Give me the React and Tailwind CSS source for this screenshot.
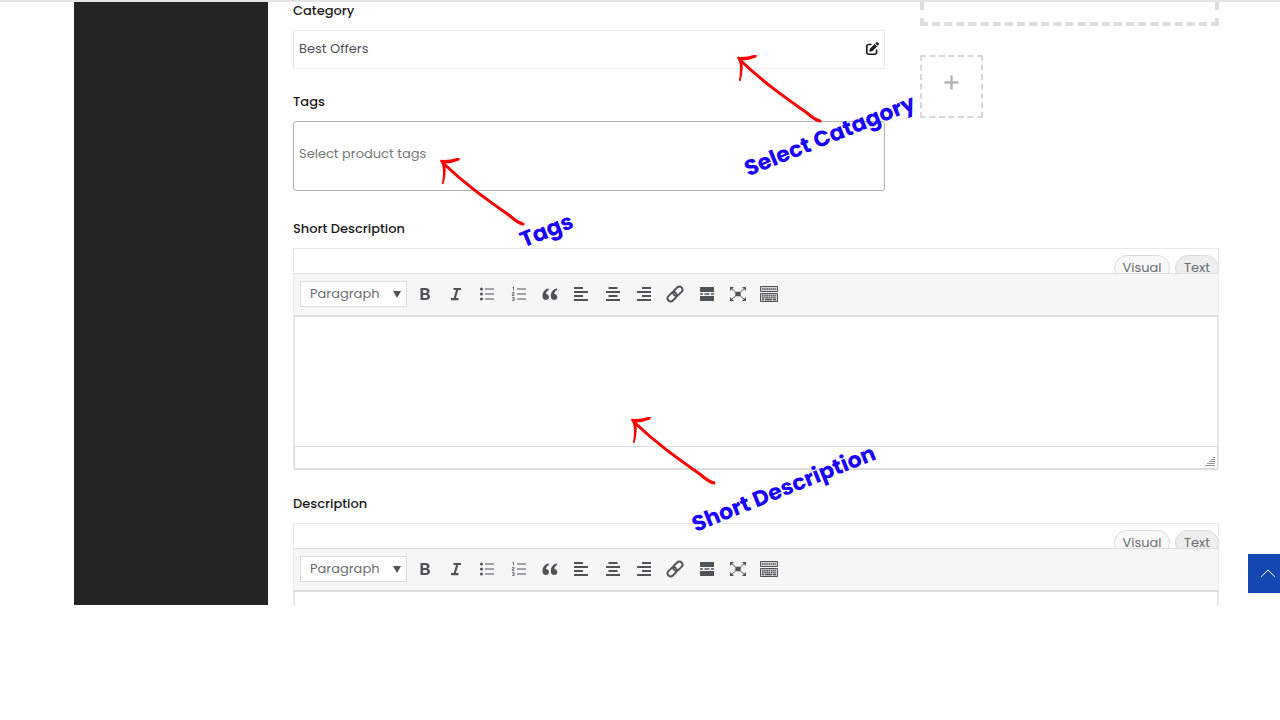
import React from 'react';
import { FaPenToSquare } from 'react-icons/fa6';

const toolbarIcons = [
  {
    label: 'Bold',
    icon: (
      <path
        fill="currentColor"
        fillRule="evenodd"
        d="M5.5 4h5c2.6 0 4 1.2 4 3.1 0 1.3-.7 2.2-1.8 2.6 1.5.4 2.3 1.4 2.3 2.9 0 2.2-1.6 3.4-4.3 3.4H5.5V4zm2.6 2v3h2c1.2 0 1.8-.5 1.8-1.5S11.3 6 10.1 6h-2zm0 4.900V14h2.300c1.300 0 2-.5 2-1.600 0-1-.7-1.500-2-1.500H8.100z"
      />
    ),
  },
  {
    label: 'Italic',
    icon: <path d="M7.500 5h7.500M5 15.200h7.500M11.500 5L8.500 15" fill="none" stroke="currentColor" strokeWidth="2.200" />,
  },
  {
    label: 'Bulleted list',
    icon: (
      <>
        <path d="M8 5h9M8 10h9M8 15h9" stroke="currentColor" strokeWidth="1.200" />
        <circle cx="4.500" cy="5" r="1.500" fill="currentColor" />
        <circle cx="4.500" cy="10" r="1.500" fill="currentColor" />
        <circle cx="4.500" cy="15" r="1.500" fill="currentColor" />
      </>
    ),
  },
  {
    label: 'Numbered list',
    icon: (
      <>
        <path d="M8 5h9M8 10h9M8 15h9" stroke="currentColor" strokeWidth="1.200" />
        <path
          d="M3.500 3.500l1-.5v3.500M3.200 8.500h1.800v1.500H3.400v1.500h1.900M3.200 13.500h1.900v3H3.200M3.600 15h1.500"
          fill="none"
          stroke="currentColor"
          strokeWidth="0.800"
        />
      </>
    ),
  },
  {
    label: 'Blockquote',
    icon: (
      <path
        fill="currentColor"
        d="M8.500 4.500C5 5 2.500 8 2.500 12c0 2.500 1.300 4 3.300 4 1.900 0 3.200-1.300 3.200-3.100 0-1.700-1.200-2.900-3-3 .2-1.900 1.100-3.200 2.800-4zM16.800 4.500c-3.500.5-6 3.500-6 7.500 0 2.500 1.300 4 3.300 4 1.900 0 3.200-1.300 3.200-3.100 0-1.700-1.200-2.900-3-3 .2-1.900 1.100-3.200 2.800-4z"
      />
    ),
  },
  {
    label: 'Align left',
    icon: <path d="M3 4h9M3 8h14M3 12h9M3 16h14" stroke="currentColor" strokeWidth="2" />,
  },
  {
    label: 'Align center',
    icon: <path d="M5.500 4h9M3 8h14M5.500 12h9M3 16h14" stroke="currentColor" strokeWidth="2" />,
  },
  {
    label: 'Align right',
    icon: <path d="M8 4h9M3 8h14M8 12h9M3 16h14" stroke="currentColor" strokeWidth="2" />,
  },
  {
    label: 'Insert link',
    icon: (
      <g fill="none" stroke="currentColor" strokeWidth="1.900" transform="rotate(-45 10 10)">
        <rect x="0.800" y="6.900" width="10.400" height="6.200" rx="3.100" />
        <rect x="8.800" y="6.900" width="10.400" height="6.200" rx="3.100" />
      </g>
    ),
  },
  {
    label: 'Read more',
    icon: (
      <>
        <path d="M3 3h14v5H3zM3 12h14v5H3z" fill="currentColor" />
        <path d="M3 10h3M7.500 10h5M14 10h3" stroke="currentColor" strokeWidth="1.300" />
      </>
    ),
  },
  {
    label: 'Fullscreen',
    icon: (
      <>
        <path d="M7.300 7.700h5.400v4.600H7.300zM2 3h4L2 7zM18 3h-4l4 4zM2 17h4l-4-4zM18 17h-4l4-4z" fill="currentColor" />
        <path d="M3 4l4.500 4M17 4l-4.500 4M3 16l4.500-4M17 16l-4.500-4" stroke="currentColor" />
      </>
    ),
  },
  {
    label: 'Toolbar toggle',
    icon: (
      <g fill="none" stroke="currentColor">
        <path d="M1.500 2.500h17v5h-17zM1.500 9.500h17v8h-17z" fill="#d4d5d6" />
        <path d="M3 5h14M3 11.500h14M3 13.500h8M12 13.500h5" strokeWidth="1.300" strokeDasharray="1.500 0.700" />
        <path d="M3 15.500h2M6 15.500h7M14 15.500h3" strokeWidth="1.300" />
      </g>
    ),
  },
];

const Arrow = ({ className }) => (
  <svg className={className} width="88" height="72" viewBox="0 0 88 72" fill="none" aria-hidden="true">
    <path d="M3 5C26 27 46 41 70 58Q78 65 83 66" stroke="#ff0000" strokeWidth="3" strokeLinecap="round" />
    <path
      d="M0 3Q0 1 4 2Q12 2 18 -0.500Q21 0 19 2.500Q13 5 5 5.500Q7 15 3.500 26Q2 27 2 25Q4 14 2 6Z"
      fill="#ff0000"
    />
  </svg>
);

const Note = ({ children, className }) => (
  <span
    className={`absolute z-10 -rotate-22 whitespace-nowrap text-[22px] font-bold leading-7 text-[#1a00ff] pointer-events-none ${className}`}
  >
    {children}
  </span>
);

const Editor = ({ id, label, bodyClass, showStatus }) => (
  <>
    <label htmlFor={id} className="block text-[13px] font-medium leading-[18px] text-[#1c1c1c]">
      {label}
    </label>
    <div className="mt-[10px] border-x border-t border-[#e8e8e8]">
      <div className="-mr-px flex h-6 justify-end gap-[5px] overflow-hidden pt-[6px]">
        <button
          type="button"
          className="h-[26px] w-14 shrink-0 rounded-full border border-[#dddddd] bg-[#f8f8f8] text-[13px] leading-6 text-[#6b6e70]"
        >
          Visual
        </button>
        <button
          type="button"
          className="h-[26px] w-11 shrink-0 rounded-full border border-[#dddddd] bg-[#eeeeee] text-[13px] leading-6 text-[#6b6e70]"
        >
          Text
        </button>
      </div>
      <div className="border-t border-[#dedede]">
        <div className="flex h-[43px] items-center border-b-2 border-[#dddddd] bg-[#f6f6f6] pb-[2px] pl-[6px]">
          <div className="relative">
            <select
              aria-label="Block format"
              className="block h-[26px] w-[107px] appearance-none border border-[#dddddd] bg-white pl-[9px] text-[13px] text-[#6b6e70]"
            >
              <option>Paragraph</option>
            </select>
            <svg className="pointer-events-none absolute right-[6px] top-[10px]" width="8" height="7" viewBox="0 0 8 7">
              <path d="M0 0h8L4 7z" fill="#505356" />
            </svg>
          </div>
          <div className="ml-[2px] grid w-[376px] grid-cols-12 text-[#505356]">
            {toolbarIcons.map((item) => (
              <button key={item.label} type="button" aria-label={item.label} className="flex justify-center">
                <svg width="20" height="20" viewBox="0 0 20 20">
                  {item.icon}
                </svg>
              </button>
            ))}
          </div>
        </div>
        <textarea id={id} className={`block w-full resize-none border-x border-[#e4e4e4] outline-none ${bodyClass}`} />
        {showStatus && (
          <div className="flex h-6 items-end justify-end border-x border-b-2 border-t border-[#dddddd] p-[2px]">
            <svg width="10" height="10" viewBox="0 0 10 10" stroke="#999999" aria-hidden="true">
              <path d="M8 1.500h2M6 3.500h4M4 5.500h6M2 7.500h8M0 9.500h10" />
            </svg>
          </div>
        )}
      </div>
    </div>
  </>
);

const App = () => {
  return (
    <div className="relative flex overflow-hidden border-t-2 border-[#e4e4e4] bg-white pl-[74px] pr-[61px] font-['Poppins','Inter',sans-serif] text-[13px]">
      <aside className="w-[194px] shrink-0 bg-[#242424]" />

      <main className="min-w-0 flex-1 pl-[25px]">
        <div className="flex gap-[35px]">
          <div className="relative min-w-0 flex-1">
            <p className="font-medium leading-[18px] text-[#1c1c1c]">Category</p>
            <div className="mt-[10px] flex h-[39px] items-center justify-between border border-[#ebebeb] pb-[2px] pl-[5px] pr-[5px] text-[#505356]">
              <span>Best Offers</span>
              <button type="button" aria-label="Edit category" className="text-[#1c1c1c]">
                <FaPenToSquare size={13} />
              </button>
            </div>

            <label htmlFor="tags" className="mt-6 block font-medium leading-[18px] text-[#1c1c1c]">
              Tags
            </label>
            <input
              id="tags"
              type="text"
              placeholder="Select product tags"
              className="mt-[10px] block h-[70px] w-full rounded-[3px] border border-[#b0b0b0] px-[5px] pb-[5px] outline-none placeholder:text-[#777777]"
            />

            <Arrow className="pointer-events-none absolute right-[60px] top-[53px]" />
            <Note className="right-[-36px] top-[120px]">Select Catagory</Note>
            <Arrow className="pointer-events-none absolute left-[147px] top-[156px]" />
            <Note className="left-[226px] top-[215px]">Tags</Note>
          </div>

          <div className="w-[299px] shrink-0">
            <div className="h-6 border-x-4 border-b-4 border-dashed border-[#dddddd]" />
            <button
              type="button"
              aria-label="Add image"
              className="mt-[29px] flex h-[63px] w-[63px] justify-center border-2 border-dashed border-[#d8d8d8] pt-[18px] text-[#b5b5b5]"
            >
              <svg width="16" height="16" viewBox="0 0 16 16" stroke="currentColor" strokeWidth="2.500">
                <path d="M7.500 0.500v14M0.500 7.500h14" />
              </svg>
            </button>
          </div>
        </div>

        <div className="relative mt-[29px]">
          <Editor id="short-description" label="Short Description" bodyClass="h-[129px]" showStatus />
          <Arrow className="pointer-events-none absolute left-[338px] top-[197px]" />
          <Note className="left-[393px] top-[255px]">Short Description</Note>
        </div>

        <div className="mt-[25px]">
          <Editor id="description" label="Description" bodyClass="h-[13px]" />
        </div>
      </main>

      <button
        type="button"
        aria-label="Back to top"
        className="absolute bottom-3 right-0 flex h-[39px] w-8 items-center justify-end overflow-hidden bg-[#1447b2] text-white"
      >
        <svg className="shrink-0" width="20" height="16" viewBox="0 0 20 16" fill="none" stroke="currentColor">
          <path d="M1 11l7-7 7 7" />
        </svg>
      </button>
    </div>
  );
};

export default App;
